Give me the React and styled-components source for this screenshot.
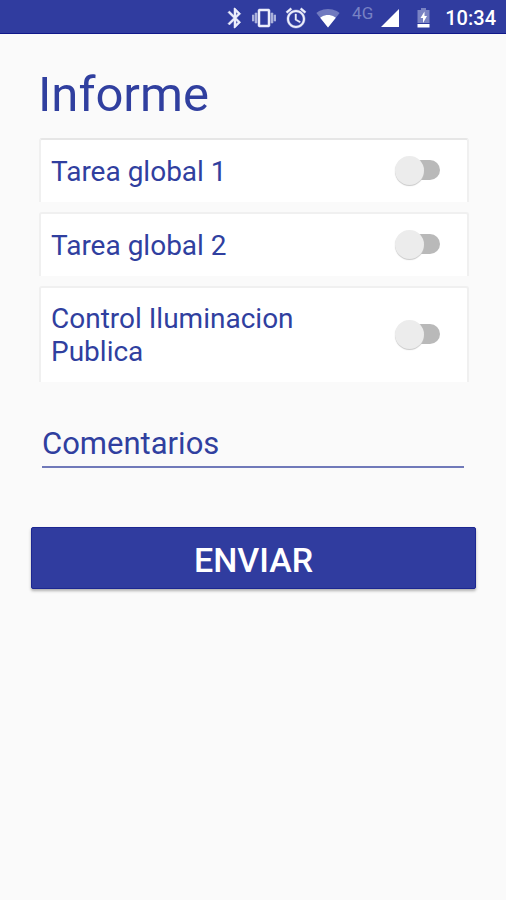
import React, { useState } from "react";
import styled, { createGlobalStyle } from "styled-components";

const GlobalStyle = createGlobalStyle`
  *, *::before, *::after { box-sizing: border-box; }
  body {
    margin: 0;
    background: #fafafa;
    color: #303f9f;
    font-family: Roboto, "Noto Sans", sans-serif;
  }
`;

const Screen = styled.div`
  min-height: 100vh;
  background: #fafafa;
`;

const StatusBar = styled.header`
  display: flex;
  align-items: center;
  justify-content: flex-end;
  gap: 8px;
  height: 34px;
  padding: 2px 10px 0 0;
  background: #303c9f;
  border-bottom: 1px solid #10188a;
  color: #fff;
`;

const Icon = styled.svg`
  display: block;
  flex: none;
  width: ${(p) => p.$width || 24}px;
  height: 24px;
  fill: #eceefb;
`;

const Network = styled.span`
  align-self: flex-start;
  margin-left: 4px;
  font-size: 17px;
  line-height: 22px;
  color: #7882c4;
`;

const Clock = styled.time`
  font-size: 20px;
  font-weight: 500;
  line-height: 24px;
`;

const Form = styled.form`
  display: flex;
  flex-direction: column;
  padding: 29px 30px 0 31px;
`;

const Title = styled.h1`
  margin: 0 7px 11px;
  font-size: 49px;
  font-weight: 400;
  line-height: 64px;
`;

const TaskList = styled.ul`
  display: flex;
  flex-direction: column;
  gap: 10px;
  margin: 0 7px 0 8px;
  padding: 0;
  list-style: none;
`;

const TaskCard = styled.li`
  display: flex;
  align-items: center;
  justify-content: space-between;
  min-height: 64px;
  padding: 14px 26px 14px 10px;
  background: #fff;
  border: solid #f0f0f0;
  border-width: 2px 2px 0;
  border-radius: 3px 3px 0 0;

  &:first-child {
    border-top-color: #e6e6e6;
  }
`;

const TaskLabel = styled.label`
  max-width: 270px;
  font-size: 28px;
  line-height: 33px;
`;

const Switch = styled.input`
  appearance: none;
  display: grid;
  align-items: center;
  flex: none;
  width: 46px;
  height: 30px;
  margin: 0 0 2px;
  cursor: pointer;

  &::before,
  &::after {
    content: "";
    grid-area: 1 / 1;
  }

  &::before {
    height: 20px;
    margin: 0 1px 0 5px;
    border-radius: 10px;
    background: ${(p) => (p.checked ? "#9fa8da" : "#b9b9b9")};
  }

  &::after {
    justify-self: ${(p) => (p.checked ? "end" : "start")};
    width: 29px;
    height: 29px;
    border-radius: 50%;
    background: ${(p) => (p.checked ? "#303f9f" : "#ececec")};
    box-shadow: 0 1px 1px #c8c8c8;
  }
`;

const Comments = styled.input`
  width: auto;
  height: 52px;
  margin: 34px 12px 0 11px;
  padding: 4px 0 0;
  border: 0;
  border-bottom: 2px solid #7079b9;
  border-radius: 0;
  outline: 0;
  background: transparent;
  color: #303f9f;
  font: 400 31px/40px Roboto, "Noto Sans", sans-serif;

  &::placeholder {
    color: #303f9f;
    opacity: 1;
  }
`;

const SubmitButton = styled.button`
  height: 62px;
  margin-top: 59px;
  padding: 3px 0 0;
  border: 1px solid #1c2791;
  border-radius: 2px;
  background: #303c9f;
  box-shadow: 0 2px 3px rgba(0, 0, 0, 0.3);
  color: #fff;
  font: 500 34px/40px Roboto, "Noto Sans", sans-serif;
  cursor: pointer;
`;

const tasks = ["Tarea global 1", "Tarea global 2", "Control Iluminacion Publica"];

function PhoneStatus() {
  return (
    <StatusBar>
      <Icon viewBox="-3 0 24 24" aria-label="Bluetooth">
        <path d="M17.71 7.71L12 2h-1v7.59L6.41 5 5 6.41 10.59 12 5 17.59 6.41 19 11 14.41V22h1l5.71-5.71-4.3-4.29 4.3-4.29zM13 5.83l1.88 1.88L13 9.59V5.83zm1.88 10.46L13 18.17v-3.76l1.88 1.88z" stroke="#eceefb" strokeWidth=".5" />
      </Icon>
      <Icon viewBox="0 0 24 24" aria-label="Vibrar">
        <path opacity=".65" stroke="#eceefb" strokeWidth=".6" d="M0 15h2V9H0v6zm3 2h2V7H3v10zm19-8v6h2V9h-2zm-3 8h2V7h-2v10z" />
        <path stroke="#eceefb" strokeWidth=".5" d="M16.5 3h-9C6.67 3 6 3.67 6 4.5v15c0 .83.67 1.5 1.5 1.5h9c.83 0 1.5-.67 1.5-1.5v-15c0-.83-.67-1.5-1.5-1.500zM16 19H8V5h8v14z" />
      </Icon>
      <Icon viewBox="0 0 24 24" aria-label="Alarma">
        <path stroke="#eceefb" strokeWidth=".4" d="M22 5.72l-4.6-3.86-1.29 1.53 4.6 3.86L22 5.72zM7.88 3.39L6.6 1.86 2 5.71l1.29 1.53 4.59-3.85zM12.5 8H11v6l4.75 2.85.75-1.23-4-2.37V8zM12 4c-4.97 0-9 4.03-9 9s4.02 9 9 9 9-4.03 9-9-4.03-9-9-9zm0 16c-3.87 0-7-3.13-7-7s3.13-7 7-7 7 3.13 7 7-3.13 7-7 7z" />
      </Icon>
      <Icon viewBox="0 0 24 24" aria-label="Wi-Fi">
        <path opacity=".35" d="M12 21.5L23.64 7C23.19 6.66 18.71 3 12 3S.81 6.66.36 7L12 21.5z" />
        <path fill="#fff" d="M4.2 11.8L12 21.5l7.8-9.7C19.3 11.4 16.5 9 12 9s-7.3 2.4-7.8 2.8z" />
      </Icon>
      <Network>4G</Network>
      <Icon $width={18} viewBox="0 0 18 24" aria-label="Señal">
        <path fill="#fff" d="M0 21L18 3v18z" />
      </Icon>
      <Icon $width={30} viewBox="-10 0 30 24" aria-label="Batería">
        <path opacity=".4" d="M4 2h5v2h3.500v13H.5V4H4z" />
        <path fill="#fff" d="M.5 18h12v3.5H.5zM7.500 5.500L3.500 12h2.500v5l4-7H7.500z" />
      </Icon>
      <Clock>10:34</Clock>
    </StatusBar>
  );
}

function Task({ id, name }) {
  const [done, setDone] = useState(false);
  return (
    <TaskCard>
      <TaskLabel htmlFor={id}>{name}</TaskLabel>
      <Switch id={id} type="checkbox" role="switch" checked={done} onChange={(e) => setDone(e.target.checked)} />
    </TaskCard>
  );
}

export default function App() {
  return (
    <Screen>
      <GlobalStyle />
      <PhoneStatus />
      <Form onSubmit={(e) => e.preventDefault()}>
        <Title>Informe</Title>
        <TaskList>
          {tasks.map((name, i) => (
            <Task key={name} id={`task-${i + 1}`} name={name} />
          ))}
        </TaskList>
        <Comments type="text" placeholder="Comentarios" aria-label="Comentarios" />
        <SubmitButton type="submit">ENVIAR</SubmitButton>
      </Form>
    </Screen>
  );
}
